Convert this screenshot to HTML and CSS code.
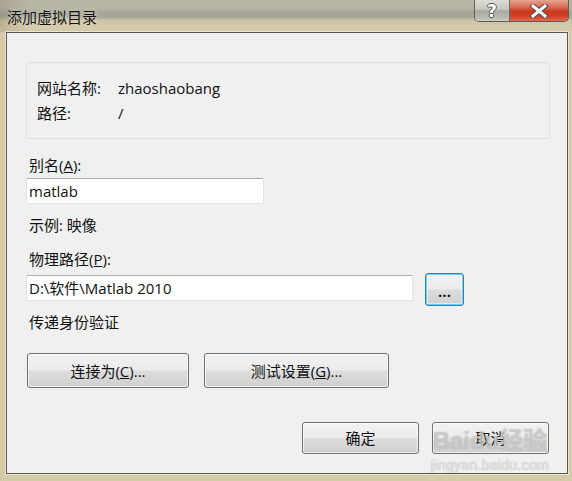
FILE: index.html
```html
<!DOCTYPE html>
<html lang="zh-CN">
<head>
<meta charset="utf-8">
<title>添加虚拟目录</title>
<link rel="stylesheet" href="styles.css">
</head>
<body>
<div class="window">
  <div class="titlebar">
    <span class="title">添加虚拟目录</span>
    <div class="caption-buttons">
      <span class="cap help"><span class="qmark">?</span></span>
      <span class="cap close">
        <svg width="22" height="14" viewBox="0 0 22 14">
          <path d="M5 2 L17 12 M17 2 L5 12" stroke="#4a4a4a" stroke-width="5" stroke-linecap="square"/>
          <path d="M5 2 L17 12 M17 2 L5 12" stroke="#ffffff" stroke-width="3" stroke-linecap="square"/>
        </svg>
      </span>
    </div>
  </div>
  <div class="client">
    <div class="groupbox">
      <span>网站名称:</span><span class="latin">zhaoshaobang</span>
      <span>路径:</span><span class="latin">/</span>
    </div>
    <div class="label first">别名(<u>A</u>):</div>
    <div class="input short">matlab</div>
    <div class="label hint">示例: 映像</div>
    <div class="label">物理路径(<u>P</u>):</div>
    <div class="path-row">
      <div class="input long">D:\软件\Matlab 2010</div>
      <button class="btn browse">...</button>
    </div>
    <div class="label pass">传递身份验证</div>
    <div class="btn-row">
      <button class="btn connect">连接为(<u>C</u>)...</button>
      <button class="btn test">测试设置(<u>G</u>)...</button>
    </div>
    <div class="footer">
      <button class="btn ok">确定</button>
      <button class="btn cancel">取消</button>
    </div>
    <div class="watermark">
      <span class="wm-big">Baidu经验</span>
      <span class="wm-small">jingyan.baidu.com</span>
    </div>
  </div>
</div>
</body>
</html>
```

FILE: styles.css
```css
* { box-sizing: border-box; }

html, body {
  margin: 0;
  padding: 0;
}

body {
  width: 572px;
  height: 481px;
  overflow: hidden;
  background: #d3caa9;
  font-family: "Open Sans", "Noto Sans CJK SC", sans-serif;
  font-size: 15px;
  color: #111;
}

.window {
  display: flex;
  flex-direction: column;
  width: 572px;
  height: 481px;
}

.titlebar {
  height: 32px;
  display: flex;
  align-items: flex-start;
  justify-content: space-between;
  background:
    linear-gradient(to right, rgba(120,115,95,0.25) 0, rgba(0,0,0,0) 30px),
    linear-gradient(to bottom, #b9b5a2 0, #b7b4a3 8px, #a4a497 13px, #a7a697 17px, #cec6a7 21px, #d4cbab 31px);
}

.title {
  margin: 7px 0 0 7px;
  line-height: 20px;
  font-size: 15px;
  color: #161616;
  text-shadow: 0 0 6px rgba(255,255,240,0.7);
}

.caption-buttons {
  display: flex;
  margin-right: 3px;
  height: 22px;
  border: 1px solid #5f5d57;
  border-top: none;
  border-radius: 0 0 5px 5px;
  overflow: hidden;
}

.cap {
  display: flex;
  align-items: center;
  justify-content: center;
  height: 21px;
}

.help {
  width: 35px;
  border-right: 1px solid #6a6a66;
  background: linear-gradient(to bottom, #dcdcd6 0, #c9c9c2 9px, #a9aaa2 11px, #b9bab2 18px, #cfcfc8 21px);
}

.qmark {
  font-family: "DejaVu Sans", sans-serif;
  font-weight: bold;
  font-size: 17px;
  line-height: 20px;
  color: #fff;
  text-shadow: 1px 0 0 #555, -1px 0 0 #555, 0 1px 0 #555, 0 -1px 0 #555;
}

.close {
  width: 58px;
  background: linear-gradient(to bottom, #e7a493 0, #d7634c 8px, #c8381f 11px, #cf4127 16px, #e2694d 21px);
}

.client {
  position: relative;
  flex: 1;
  margin: 0 4px 7px 6px;
  border: 1px solid #5a574f;
  box-shadow: 0 0 0 1px #ebe5d0;
  background: #f0f0f0;
  padding: 29px 18px 0 19px;
  line-height: 25px;
}

.latin { font-family: "Open Sans", "Noto Sans CJK SC", sans-serif; }

.groupbox {
  height: 77px;
  margin-right: -1px;
  border: 1px solid #d7e0e7;
  border-radius: 3px;
  padding: 13px 0 0 10px;
  display: grid;
  grid-template-columns: 81px auto;
  grid-auto-rows: 25px;
  align-content: start;
}

.label { padding-left: 3px; height: 25px; margin-top: 9px; }
.label.first { margin-top: 14px; }
.label.pass { margin-top: 4px; }

.input {
  height: 26px;
  background: #fff;
  border: 1px solid #dfe3ea;
  border-top-color: #abadb3;
  border-radius: 2px;
  padding-left: 2px;
  line-height: 24px;
  white-space: nowrap;
}

.input.short { width: 238px; }
.input.long { width: 387px; margin-top: 2px; }

.path-row {
  display: flex;
  align-items: flex-start;
  gap: 12px;
  height: 33px;
  margin-top: 1px;
}

.btn {
  font-family: "Open Sans", "Noto Sans CJK SC", sans-serif;
  font-size: 15px;
  color: #111;
  border: 1px solid #707070;
  border-radius: 3px;
  background: linear-gradient(to bottom, #f2f2f2 0, #ebebeb 48%, #dddddd 52%, #cfcfcf 100%);
  box-shadow: inset 0 0 0 1px rgba(255,255,255,0.7);
  padding: 0;
  line-height: 20px;
}

.btn.browse {
  width: 39px;
  height: 33px;
  border-color: #3c7fb1;
  box-shadow: inset 0 0 0 1px #5fd4f7, inset 0 0 0 2px rgba(255,255,255,0.5);
  font-weight: bold;
  padding-top: 2px;
}

.btn-row {
  display: flex;
  gap: 15px;
  margin-top: 18px;
  padding-left: 1px;
  height: 35px;
}

.btn.connect { width: 162px; height: 35px; }
.btn.test { width: 185px; height: 35px; }

.footer {
  display: flex;
  justify-content: flex-end;
  gap: 13px;
  margin-top: 34px;
}

.btn.ok, .btn.cancel { width: 117px; height: 32px; }

.watermark {
  position: absolute;
  left: 430px;
  top: 393px;
  width: 106px;
  display: flex;
  flex-direction: column;
  align-items: center;
  pointer-events: none;
  white-space: nowrap;
}

.wm-big {
  font-family: "Liberation Sans", "Noto Sans CJK SC", sans-serif;
  font-weight: bold;
  font-size: 24px;
  line-height: 30px;
  color: rgba(255,255,255,0.5);
  text-shadow: 0 0 1px rgba(110,110,110,0.7);
}

.wm-small {
  font-family: "Liberation Sans", sans-serif;
  font-size: 14px;
  letter-spacing: 0.3px;
  line-height: 16px;
  margin-top: 1px;
  color: rgba(255,255,255,0.7);
  text-shadow: 0 0 1px rgba(110,110,110,0.7);
}
```
